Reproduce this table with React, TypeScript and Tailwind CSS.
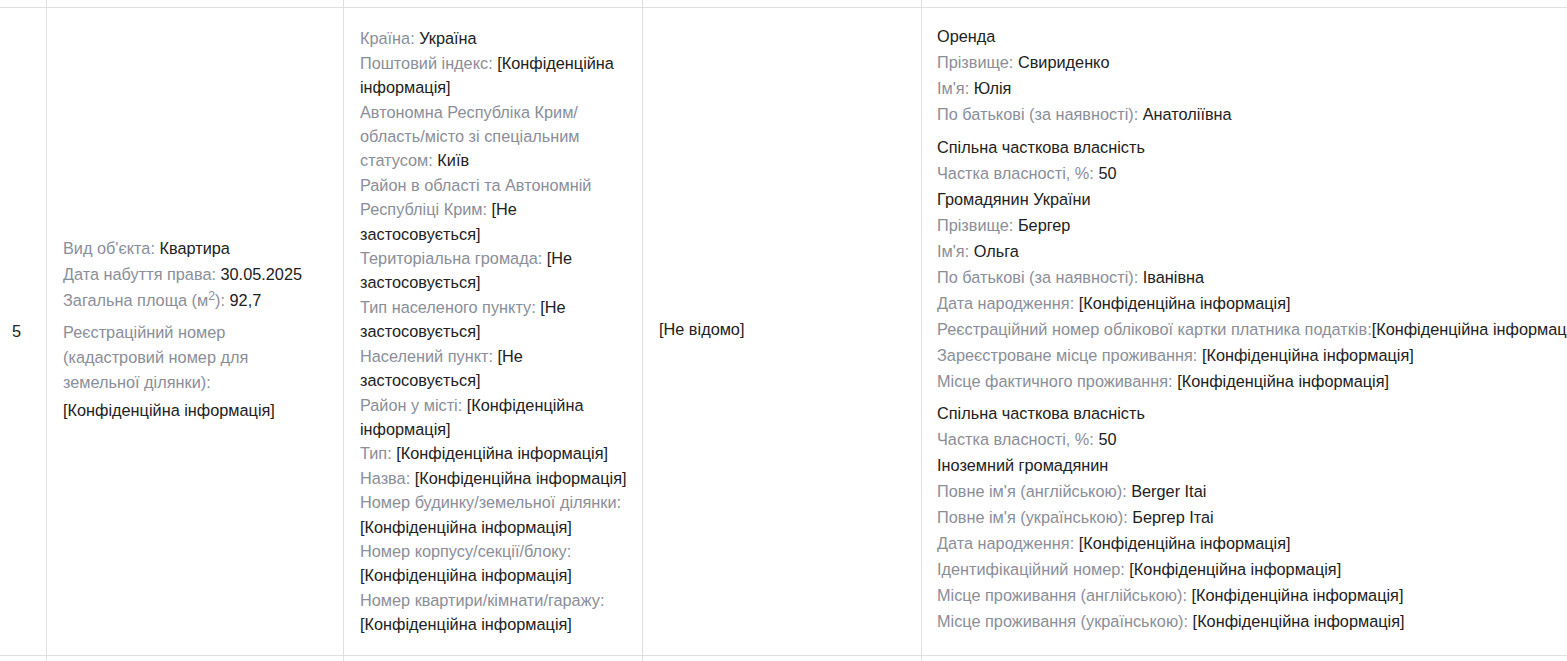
const CONF = "[Конфіденційна інформація]";

type Field = { label?: string; value?: string };

function Line({ label, value }: Field) {
  return (
    <div>
      {label && <span className="text-[#8a8e99]">{label}: </span>}
      {value && <span className="text-[#212121]">{value}</span>}
    </div>
  );
}

const ADDRESS: Field[] = [
  { label: "Країна", value: "Україна" },
  { label: "Поштовий індекс", value: CONF },
  { label: "Автономна Республіка Крим/ область/місто зі спеціальним статусом", value: "Київ" },
  { label: "Район в області та Автономній Республіці Крим", value: "[Не застосовується]" },
  { label: "Територіальна громада", value: "[Не застосовується]" },
  { label: "Тип населеного пункту", value: "[Не застосовується]" },
  { label: "Населений пункт", value: "[Не застосовується]" },
  { label: "Район у місті", value: CONF },
  { label: "Тип", value: CONF },
  { label: "Назва", value: CONF },
  { label: "Номер будинку/земельної ділянки", value: CONF },
  { label: "Номер корпусу/секції/блоку", value: CONF },
  { label: "Номер квартири/кімнати/гаражу", value: CONF },
];

const OWNERS: Field[][] = [
  [
    { value: "Оренда" },
    { label: "Прізвище", value: "Свириденко" },
    { label: "Ім'я", value: "Юлія" },
    { label: "По батькові (за наявності)", value: "Анатоліївна" },
  ],
  [
    { value: "Спільна часткова власність" },
    { label: "Частка власності, %", value: "50" },
    { value: "Громадянин України" },
    { label: "Прізвище", value: "Бергер" },
    { label: "Ім'я", value: "Ольга" },
    { label: "По батькові (за наявності)", value: "Іванівна" },
    { label: "Дата народження", value: CONF },
    { label: "Реєстраційний номер облікової картки платника податків", value: CONF },
    { label: "Зареєстроване місце проживання", value: CONF },
    { label: "Місце фактичного проживання", value: CONF },
  ],
  [
    { value: "Спільна часткова власність" },
    { label: "Частка власності, %", value: "50" },
    { value: "Іноземний громадянин" },
    { label: "Повне ім'я (англійською)", value: "Berger Itai" },
    { label: "Повне ім'я (українською)", value: "Бергер Ітаі" },
    { label: "Дата народження", value: CONF },
    { label: "Ідентифікаційний номер", value: CONF },
    { label: "Місце проживання (англійською)", value: CONF },
    { label: "Місце проживання (українською)", value: CONF },
  ],
];

const cell = "border border-[#e0e0e0] align-middle";

export default function App() {
  return (
    <div className="h-[661px] w-[1567px] overflow-hidden bg-white font-['Liberation_Sans',Arial,sans-serif] text-[16.3px] text-[#212121]">
      <table className="-mt-px -ml-px w-[1720px] table-fixed border-collapse">
        <colgroup>
          <col className="w-[47px]" />
          <col className="w-[297px]" />
          <col className="w-[299px]" />
          <col className="w-[279px]" />
          <col />
        </colgroup>
        <tbody>
          <tr className="h-[8px]">
            <td className={cell} />
            <td className={cell} />
            <td className={cell} />
            <td className={cell} />
            <td className={cell} />
          </tr>
          <tr>
            <td className={`${cell} pl-[12px]`}>5</td>
            <td className={`${cell} px-4 pb-[5px]`}>
              <div className="leading-[26px]">
                <Line label="Вид об'єкта" value="Квартира" />
                <Line label="Дата набуття права" value="30.05.2025" />
                <div>
                  <span className="text-[#8a8e99]">
                    Загальна площа (м<sup>2</sup>):{" "}
                  </span>
                  92,7
                </div>
              </div>
              <div className="mt-[7px] max-w-[250px] leading-[25px]">
                <div className="text-[#8a8e99]">
                  Реєстраційний номер (кадастровий номер для земельної ділянки):
                </div>
                <div className="mt-[3px]">{CONF}</div>
              </div>
            </td>
            <td className={`${cell} pl-4 pr-[10px] leading-[24.4px]`}>
              {ADDRESS.map((f, i) => (
                <Line key={i} {...f} />
              ))}
            </td>
            <td className={`${cell} px-4 pb-[4px]`}>[Не відомо]</td>
            <td className={`${cell} pl-[15px] pr-4 pt-[15px] pb-[21px] whitespace-nowrap leading-[26px]`}>
              {OWNERS.map((group, gi) => (
                <div key={gi} className={gi > 0 ? "mt-[6.5px]" : ""}>
                  {group.map((f, i) =>
                    f.label === "Реєстраційний номер облікової картки платника податків" ? (
                      <div key={i}>
                        <span className="text-[#8a8e99]">{f.label}:</span>
                        {f.value}
                      </div>
                    ) : (
                      <Line key={i} {...f} />
                    )
                  )}
                </div>
              ))}
            </td>
          </tr>
          <tr className="h-[8px]">
            <td className={cell} />
            <td className={cell} />
            <td className={cell} />
            <td className={cell} />
            <td className={cell} />
          </tr>
        </tbody>
      </table>
    </div>
  );
}
